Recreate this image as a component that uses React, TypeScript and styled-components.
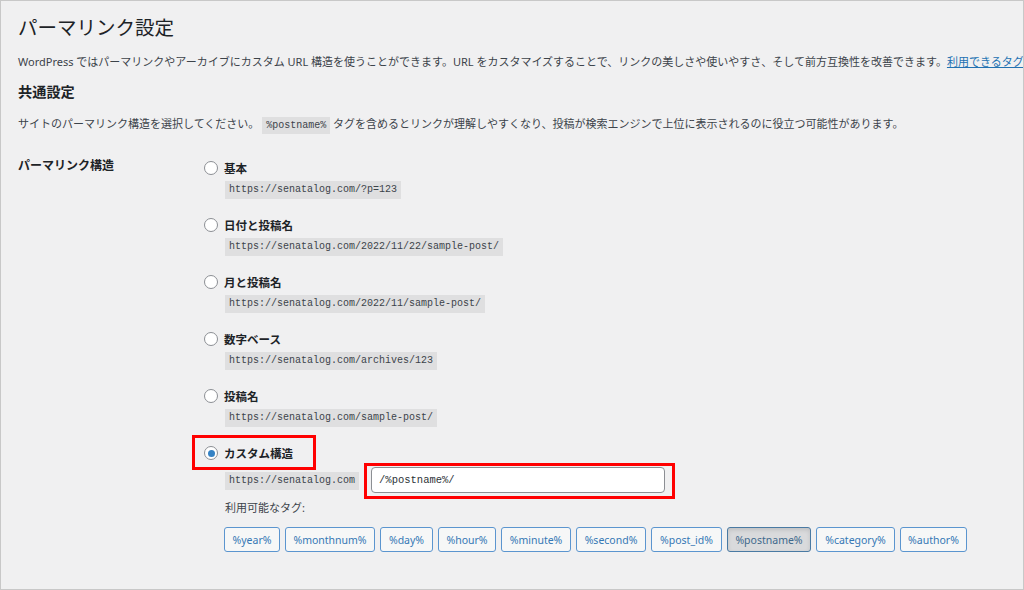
import React from "react";
import styled, { createGlobalStyle } from "styled-components";

const GlobalStyle = createGlobalStyle`
  html, body {
    margin: 0;
    padding: 0;
    background: #f0f0f1;
  }
`;

const sans = `"Noto Sans", "Noto Sans CJK JP", sans-serif`;
const mono = `"Liberation Mono", "DejaVu Sans Mono", monospace`;

const Page = styled.div`
  width: 1024px;
  height: 590px;
  box-sizing: border-box;
  border: 1px solid #c8c8c8;
  padding-left: 17px;
  overflow: hidden;
  background: #f0f0f1;
  color: #3c434a;
  font-family: ${sans};
`;

const Title = styled.h1`
  margin: 13px 0 0;
  font-size: 19.5px;
  line-height: 26px;
  font-weight: 400;
  color: #1d2327;
  font-family: "Noto Sans CJK JP", sans-serif;
`;

const Text = styled.p<{ $top: number }>`
  margin: ${({ $top }) => $top}px 0 0;
  font-size: 11px;
  line-height: 16px;
  white-space: nowrap;
`;

const Link = styled.a`
  color: #2271b1;
  text-decoration: underline;
`;

const Heading = styled.h2`
  margin: 12px 0 0;
  font-size: 14.2px;
  line-height: 20px;
  font-weight: 700;
  color: #1d2327;
`;

const Code = styled.code`
  font-family: ${mono};
  font-size: 10px;
  line-height: 12px;
  padding: 3px 4px;
  background: #dfdfe0;
  color: #3c434a;
`;

const Table = styled.div`
  display: grid;
  grid-template-columns: 186px 1fr;
  margin-top: 26px;
`;

const RowLabel = styled.div`
  font-size: 12px;
  font-weight: 700;
  line-height: 20px;
  margin-top: -2px;
  color: #1d2327;
`;

const Options = styled.div`
  display: flex;
  flex-direction: column;
`;

const RadioRow = styled.label`
  display: flex;
  align-items: center;
  gap: 6px;
  height: 20px;
  font-size: 11.5px;
  font-weight: 700;
  color: #1d2327;
  white-space: nowrap;
`;

const Radio = styled.span<{ $checked?: boolean }>`
  width: 14px;
  height: 14px;
  box-sizing: border-box;
  border: 1px solid #8c8f94;
  border-radius: 50%;
  background: #fff;
  display: flex;
  align-items: center;
  justify-content: center;
  &::after {
    content: "";
    width: 7px;
    height: 7px;
    border-radius: 50%;
    background: #3582c4;
    display: ${({ $checked }) => ($checked ? "block" : "none")};
  }
`;

const Sample = styled(Code)`
  display: block;
  width: fit-content;
  margin: 3px 0 16px 21px;
`;

const Highlight = styled.div`
  width: fit-content;
  border: 3px solid #ff0000;
  padding: 5px 20px 4px 9px;
  margin: -8px 0 -7px -12px;
`;

const CustomRow = styled.div`
  display: flex;
  align-items: center;
  gap: 5px;
  margin-left: 21px;
`;

const InlineCode = styled(Code)`
  display: inline-block;
`;

const InputFrame = styled.div`
  border: 3px solid #ff0000;
  padding: 1px 7px 3px 4px;
`;

const Input = styled.div`
  width: 294px;
  height: 26px;
  box-sizing: border-box;
  border: 1px solid #8c8f94;
  border-radius: 4px;
  background: #fff;
  padding-left: 7px;
  display: flex;
  align-items: center;
  font-family: ${mono};
  font-size: 10.5px;
  color: #2c3338;
`;

const TagsLabel = styled.div`
  margin: 1px 0 0 21px;
  font-size: 11px;
  line-height: 16px;
`;

const Tags = styled.div`
  display: flex;
  gap: 5px;
  margin: 11px 0 0 20px;
`;

const Tag = styled.button<{ $w: number; $pressed?: boolean }>`
  width: ${({ $w }) => $w}px;
  height: 25px;
  box-sizing: border-box;
  padding: 0;
  border-radius: 3px;
  font-family: ${sans};
  font-size: 10.5px;
  border: 1px solid ${({ $pressed }) => ($pressed ? "#4a7aa3" : "#5b95cf")};
  background: ${({ $pressed }) => ($pressed ? "#d9dadc" : "#f6f7f7")};
  color: ${({ $pressed }) => ($pressed ? "#40698c" : "#3577b5")};
  box-shadow: ${({ $pressed }) =>
    $pressed ? "inset 0 2px 4px rgba(0,0,0,0.12)" : "none"};
`;

const options = [
  { label: "基本", url: "https://senatalog.com/?p=123" },
  { label: "日付と投稿名", url: "https://senatalog.com/2022/11/22/sample-post/" },
  { label: "月と投稿名", url: "https://senatalog.com/2022/11/sample-post/" },
  { label: "数字ベース", url: "https://senatalog.com/archives/123" },
  { label: "投稿名", url: "https://senatalog.com/sample-post/" },
];

const tags = [
  { name: "%year%", w: 56 },
  { name: "%monthnum%", w: 90 },
  { name: "%day%", w: 53 },
  { name: "%hour%", w: 58 },
  { name: "%minute%", w: 70 },
  { name: "%second%", w: 70 },
  { name: "%post_id%", w: 71 },
  { name: "%postname%", w: 84, pressed: true },
  { name: "%category%", w: 79 },
  { name: "%author%", w: 67 },
];

export default function App() {
  return (
    <>
      <GlobalStyle />
      <Page>
        <Title>パーマリンク設定</Title>
        <Text $top={14}>
          WordPress ではパーマリンクやアーカイブにカスタム URL
          構造を使うことができます。URL
          をカスタマイズすることで、リンクの美しさや使いやすさ、そして前方互換性を改善できます。
          <Link href="#">利用できるタグはほかにも多数あります</Link>
        </Text>
        <Heading>共通設定</Heading>
        <Text $top={14}>
          サイトのパーマリンク構造を選択してください。 <Code>%postname%</Code>{" "}
          タグを含めるとリンクが理解しやすくなり、投稿が検索エンジンで上位に表示されるのに役立つ可能性があります。
        </Text>
        <Table>
          <RowLabel>パーマリンク構造</RowLabel>
          <Options>
            {options.map((o) => (
              <div key={o.label}>
                <RadioRow>
                  <Radio />
                  {o.label}
                </RadioRow>
                <Sample>{o.url}</Sample>
              </div>
            ))}
            <Highlight>
              <RadioRow>
                <Radio $checked />
                カスタム構造
              </RadioRow>
            </Highlight>
            <CustomRow>
              <InlineCode>https://senatalog.com</InlineCode>
              <InputFrame>
                <Input>/%postname%/</Input>
              </InputFrame>
            </CustomRow>
            <TagsLabel>利用可能なタグ:</TagsLabel>
            <Tags>
              {tags.map((t) => (
                <Tag key={t.name} $w={t.w} $pressed={t.pressed}>
                  {t.name}
                </Tag>
              ))}
            </Tags>
          </Options>
        </Table>
      </Page>
    </>
  );
}
